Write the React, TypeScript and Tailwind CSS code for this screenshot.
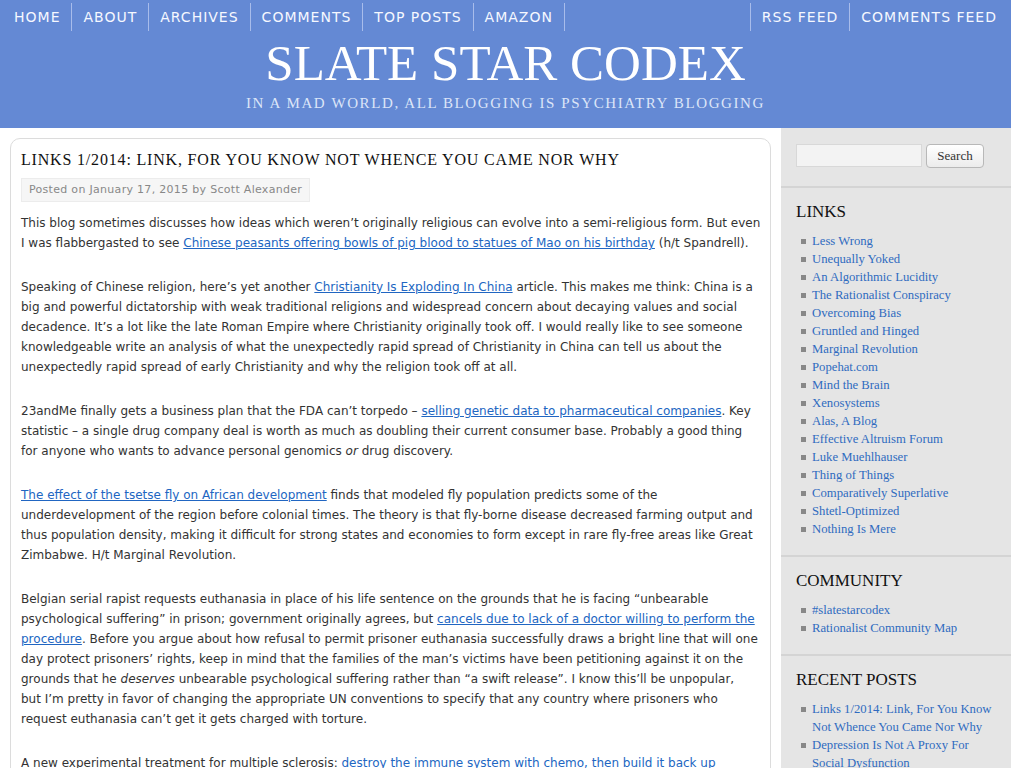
const navLeft = ["Home", "About", "Archives", "Comments", "Top Posts", "Amazon"];
const navRight = ["RSS Feed", "Comments Feed"];

const links = [
  "Less Wrong",
  "Unequally Yoked",
  "An Algorithmic Lucidity",
  "The Rationalist Conspiracy",
  "Overcoming Bias",
  "Gruntled and Hinged",
  "Marginal Revolution",
  "Popehat.com",
  "Mind the Brain",
  "Xenosystems",
  "Alas, A Blog",
  "Effective Altruism Forum",
  "Luke Muehlhauser",
  "Thing of Things",
  "Comparatively Superlative",
  "Shtetl-Optimized",
  "Nothing Is Mere",
];

const community = ["#slatestarcodex", "Rationalist Community Map"];

const recent = [
  "Links 1/2014: Link, For You Know Not Whence You Came Nor Why",
  "Depression Is Not A Proxy For Social Dysfunction",
  "Perceptions Of Required Ability Act As A Proxy For Actual Required Ability",
];

const A = ({ children }: { children: React.ReactNode }) => (
  <a href="#" className="text-[#2166c2] underline">
    {children}
  </a>
);

const Widget = ({ title, items }: { title: string; items: string[] }) => (
  <div className="border-t-2 border-[#d4d4d4] px-[15px] pt-[14px] pb-[17px]">
    <h3 className="text-[17px] leading-[20px] text-[#111] uppercase">{title}</h3>
    <ul className="mt-[10px]">
      {items.map((item) => (
        <li key={item} className="flex items-start text-[12.7px] leading-[18px]">
          <span className="mt-[7px] mr-[6px] ml-[5px] h-[5px] w-[5px] shrink-0 bg-[#888]" />
          <a href="#" className="text-[#2f6bc0]">
            {item}
          </a>
        </li>
      ))}
    </ul>
  </div>
);

const App = () => {
  return (
    <div className="min-h-screen w-[1011px] bg-white font-['DejaVu_Sans',sans-serif]">
      <header className="h-[128px] bg-[#6489d4]">
        <nav className="flex h-[36px] justify-between px-[3px] text-[14px] tracking-[1px] text-[#f6f8ff] uppercase">
          <ul className="flex">
            {navLeft.map((n, i) => (
              <li
                key={n}
                className={`mt-[3px] h-[28px] px-[11px] leading-[28px] ${i > 0 ? "border-l border-[#a8bceb]" : ""} ${i === navLeft.length - 1 ? "border-r border-[#a8bceb]" : ""}`}
              >
                {n}
              </li>
            ))}
          </ul>
          <ul className="flex">
            {navRight.map((n) => (
              <li key={n} className="mt-[3px] h-[28px] border-l border-[#a8bceb] px-[11px] leading-[28px]">
                {n}
              </li>
            ))}
          </ul>
        </nav>
        <h1 className="mt-[2px] text-center font-['Liberation_Serif',serif] text-[51px] leading-[50px] text-white uppercase">
          Slate Star Codex
        </h1>
        <p className="mt-[6px] text-center font-['Liberation_Serif',serif] text-[15px] leading-[18px] tracking-[1.6px] text-[#dce5f8] uppercase">
          In a mad world, all blogging is psychiatry blogging
        </p>
      </header>

      <div className="flex items-start">
        <main className="w-[781px] shrink-0 p-[10px]">
          <article className="rounded-[10px] border border-[#dcdcdc] pt-[9px] pr-[8px] pb-[20px] pl-[10px]">
            <h2 className="font-['Liberation_Serif',serif] text-[16px] leading-[24px] tracking-[0.82px] text-[#111] uppercase">
              Links 1/2014: Link, For You Know Not Whence You Came Nor Why
            </h2>
            <div className="mt-[6px] inline-block h-[24px] border border-[#ececec] bg-[#f6f6f6] px-[7px] text-[11px] leading-[22px] tracking-[0.3px] text-[#888]">
              Posted on January 17, 2015 by Scott Alexander
            </div>
            <div className="mt-[11px] text-[12px] leading-[20px] text-[#333]">
              <p className="mb-[24px]">
                This blog sometimes discusses how ideas which weren’t originally religious can evolve into a
                semi-religious form. But even I was flabbergasted to see{" "}
                <A>Chinese peasants offering bowls of pig blood to statues of Mao on his birthday</A> (h/t Spandrell).
              </p>
              <p className="mb-[24px]">
                Speaking of Chinese religion, here’s yet another <A>Christianity Is Exploding In China</A> article.
                This makes me think: China is a big and powerful dictatorship with weak traditional religions and
                widespread concern about decaying values and social decadence. It’s a lot like the late Roman Empire
                where Christianity originally took off. I would really like to see someone knowledgeable write an
                analysis of what the unexpectedly rapid spread of Christianity in China can tell us about the
                unexpectedly rapid spread of early Christianity and why the religion took off at all.
              </p>
              <p className="mb-[24px]">
                23andMe finally gets a business plan that the FDA can’t torpedo –{" "}
                <A>selling genetic data to pharmaceutical companies</A>. Key statistic – a single drug company deal is
                worth as much as doubling their current consumer base. Probably a good thing for anyone who wants to
                advance personal genomics <em>or</em> drug discovery.
              </p>
              <p className="mb-[24px]">
                <A>The effect of the tsetse fly on African development</A> finds that modeled fly population predicts
                some of the underdevelopment of the region before colonial times. The theory is that fly-borne
                disease decreased farming output and thus population density, making it difficult for strong states
                and economies to form except in rare fly-free areas like Great Zimbabwe. H/t Marginal Revolution.
              </p>
              <p className="mb-[24px]">
                Belgian serial rapist requests euthanasia in place of his life sentence on the grounds that he is
                facing “unbearable psychological suffering” in prison; government originally agrees, but{" "}
                <A>cancels due to lack of a doctor willing to perform the procedure</A>. Before you argue about how
                refusal to permit prisoner euthanasia successfully draws a bright line that will one day protect
                prisoners’ rights, keep in mind that the families of the man’s victims have been petitioning against
                it on the grounds that he <em>deserves</em> unbearable psychological suffering rather than “a swift
                release”. I know this’ll be unpopular,
                <br />
                but I’m pretty in favor of changing the appropriate UN conventions to specify that any country where
                prisoners who request euthanasia can’t get it gets charged with torture.
              </p>
              <p className="mb-[24px]">
                A new experimental treatment for multiple sclerosis:{" "}
                <A>destroy the immune system with chemo, then build it back up afterwards</A>. Early results are
                surprisingly good.
              </p>
            </div>
          </article>
        </main>

        <aside className="min-h-[640px] w-[230px] shrink-0 self-stretch bg-[#e5e5e5] font-['Liberation_Serif',serif]">
          <div className="flex gap-[4px] px-[15px] pt-[16px] pb-[18px]">
            <input
              type="text"
              className="h-[23px] w-[126px] border border-[#d8d8d8] bg-[#f3f3f3] outline-none"
            />
            <button className="h-[24px] w-[58px] rounded-[4px] border border-[#b8b8b8] bg-gradient-to-b from-white to-[#ececec] text-[13px] text-[#333]">
              Search
            </button>
          </div>
          <Widget title="Links" items={links} />
          <Widget title="Community" items={community} />
          <Widget title="Recent Posts" items={recent} />
        </aside>
      </div>
    </div>
  );
};

export default App;
